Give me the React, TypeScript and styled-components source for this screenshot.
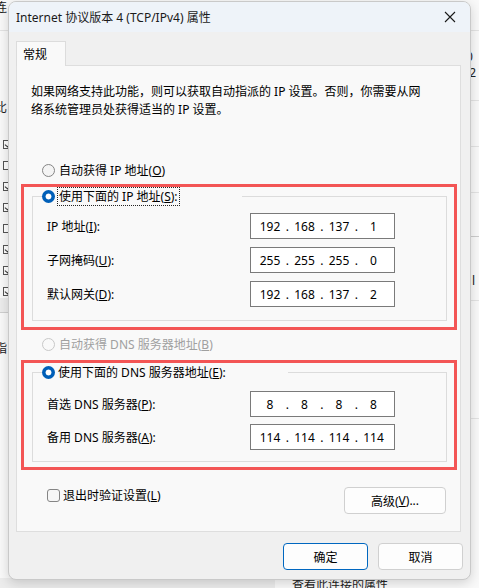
import React from "react";
import styled, { createGlobalStyle, css } from "styled-components";

const FONT = `"Noto Sans", "Noto Sans CJK SC", sans-serif`;

const GlobalStyle = createGlobalStyle`
  html, body {
    margin: 0;
    padding: 0;
  }
  body {
    background: #f7f7f7;
    font-family: ${FONT};
    font-size: 12px;
    color: #000;
  }
`;

const Screen = styled.div`
  position: relative;
  width: 479px;
  height: 588px;
  overflow: hidden;
  background: #f9f9f9;
`;

/* ---- window behind the dialog ---- */

const BackWindow = styled.div`
  position: absolute;
  inset: 0;
  background: #f9f9f9;
`;

const BgText = styled.span<{ $x: number; $y: number; $color?: string }>`
  position: absolute;
  left: ${(p) => p.$x}px;
  top: ${(p) => p.$y}px;
  font-size: 12px;
  line-height: 14px;
  color: ${(p) => p.$color || "#222"};
  white-space: nowrap;
`;

const BgCheck = styled.span<{ $y: number; $on?: boolean }>`
  position: absolute;
  left: 3px;
  top: ${(p) => p.$y}px;
  width: 9px;
  height: 9px;
  box-sizing: border-box;
  border: 1px solid #555;
  background: #fff;
  &::after {
    content: "";
    display: ${(p) => (p.$on ? "block" : "none")};
    width: 3px;
    height: 5px;
    margin: 0 0 0 2px;
    border-right: 1px solid #333;
    border-bottom: 1px solid #333;
    transform: rotate(40deg);
  }
`;

const BgLine = styled.div<{ $y: number; $x: number; $w: number; $color?: string }>`
  position: absolute;
  left: ${(p) => p.$x}px;
  top: ${(p) => p.$y}px;
  width: ${(p) => p.$w}px;
  height: 1px;
  background: ${(p) => p.$color || "#e3e3e3"};
`;

const BgBand = styled.div<{ $x: number; $y: number; $w: number; $h: number }>`
  position: absolute;
  left: ${(p) => p.$x}px;
  top: ${(p) => p.$y}px;
  width: ${(p) => p.$w}px;
  height: ${(p) => p.$h}px;
  background: #ececec;
`;

/* ---- dialog ---- */

const Dialog = styled.div`
  position: absolute;
  left: 8px;
  top: 1px;
  width: 463px;
  height: 579px;
  box-sizing: border-box;
  border: 1px solid #c9c9c9;
  border-radius: 8px;
  background: #f0f0f0;
  overflow: hidden;
  box-shadow: 0 3px 12px rgba(0, 0, 0, 0.16);
  display: flex;
  flex-direction: column;
`;

const TitleBar = styled.div`
  height: 30px;
  flex: none;
  display: flex;
  align-items: center;
  justify-content: space-between;
  padding-left: 7px;
  background: #eef3f9;
`;

const Title = styled.span`
  font-size: 12px;
  color: #1a1a1a;
`;

const CloseBox = styled.div`
  width: 40px;
  height: 30px;
  display: flex;
  align-items: center;
  justify-content: center;
`;

const Body = styled.div`
  display: flex;
  flex-direction: column;
  padding: 9px 9px 0 7px;
`;

const Tab = styled.div`
  position: relative;
  z-index: 1;
  width: 50px;
  height: 25px;
  box-sizing: border-box;
  margin-bottom: -1px;
  border: 1px solid #dcdcdc;
  border-bottom: none;
  background: #f9f9f9;
  padding-left: 6px;
  display: flex;
  align-items: center;
`;

const Panel = styled.div`
  height: 467px;
  box-sizing: border-box;
  border: 1px solid #dedede;
  background: #f9f9f9;
  display: flex;
  flex-direction: column;
`;

const Description = styled.p`
  margin: 17px 0 0 14px;
  line-height: 17.5px;
`;

const RadioRow = styled.div<{ $top: number; $disabled?: boolean }>`
  margin: ${(p) => p.$top}px 0 0 25px;
  height: 18px;
  display: flex;
  align-items: center;
  gap: 4px;
  color: ${(p) => (p.$disabled ? "#a0a0a0" : "#000")};
`;

const RadioDot = styled.span<{ $checked?: boolean; $disabled?: boolean }>`
  flex: none;
  width: 13px;
  height: 13px;
  border-radius: 50%;
  box-sizing: border-box;
  ${(p) =>
    p.$checked
      ? css`
          background: radial-gradient(circle, #fff 0 2.6px, #005fb8 3.3px);
        `
      : css`
          border: 1px solid ${p.$disabled ? "#c8c8c8" : "#858585"};
          background: ${p.$disabled ? "#f9f9f9" : "#f4f4f4"};
        `}
`;

const FocusLabel = styled.span`
  outline: 1px dotted #222;
  outline-offset: 0;
  padding: 0 1px;
  line-height: 17px;
`;

const RedFrame = styled.div<{ $top: number; $bottom: number }>`
  margin: ${(p) => p.$top}px 3px 0 4px;
  border: 3px solid #f35555;
  padding: 0 7px ${(p) => p.$bottom}px 8px;
`;

const GroupBox = styled.fieldset<{ $padTop: number; $padBottom: number }>`
  margin: 0;
  min-width: 0;
  border: 1px solid #dcdcdc;
  padding: ${(p) => p.$padTop}px 14px ${(p) => p.$padBottom}px 14px;
`;

const GroupLegend = styled.legend<{ $width: number }>`
  margin-left: -5px;
  padding: 0;
  width: ${(p) => p.$width}px;
  height: 18px;
  display: flex;
  align-items: center;
  gap: 3px;
`;

const FieldGrid = styled.div<{ $gap: number }>`
  display: grid;
  grid-template-columns: 203px 145px;
  row-gap: ${(p) => p.$gap}px;
  align-items: center;
`;

const FieldLabel = styled.span`
  white-space: nowrap;
`;

const IpBox = styled.div`
  width: 145px;
  height: 26px;
  box-sizing: border-box;
  border: 1px solid #7a7a7a;
  background: #fff;
  padding-left: 6px;
  display: flex;
  align-items: center;
  font-size: 12px;
`;

const IpPart = styled.span`
  width: 26px;
  text-align: center;
`;

const IpDot = styled.span`
  width: 8.5px;
  text-align: center;
`;

const BottomRow = styled.div`
  margin: 16px 14px 0 30px;
  display: flex;
  align-items: flex-start;
  justify-content: space-between;
`;

const CheckRow = styled.label`
  height: 18px;
  display: flex;
  align-items: center;
  gap: 3px;
`;

const CheckBox = styled.span`
  width: 13px;
  height: 13px;
  box-sizing: border-box;
  border: 1px solid #858585;
  border-radius: 3px;
  background: #f6f6f6;
`;

const Button = styled.div<{ $primary?: boolean; $width: number; $top?: number }>`
  width: ${(p) => p.$width}px;
  height: 27px;
  margin-top: ${(p) => p.$top || 0}px;
  box-sizing: border-box;
  border: 1px solid ${(p) => (p.$primary ? "#0067c0" : "#d0d0d0")};
  border-radius: 4px;
  background: #fdfdfd;
  display: flex;
  align-items: center;
  justify-content: center;
`;

const Footer = styled.div`
  display: flex;
  justify-content: flex-end;
  gap: 10px;
  padding-top: 11px;
  margin-right: -2px;
`;

const IpField = ({ parts }: { parts: string[] }) => (
  <IpBox>
    {parts.map((p, i) => (
      <React.Fragment key={i}>
        {i > 0 && <IpDot>.</IpDot>}
        <IpPart>{p}</IpPart>
      </React.Fragment>
    ))}
  </IpBox>
);

const ipRows = [
  { label: "IP 地址(", key: "I", parts: ["192", "168", "137", "1"] },
  { label: "子网掩码(", key: "U", parts: ["255", "255", "255", "0"] },
  { label: "默认网关(", key: "D", parts: ["192", "168", "137", "2"] },
];

const dnsRows = [
  { label: "首选 DNS 服务器(", key: "P", parts: ["8", "8", "8", "8"] },
  { label: "备用 DNS 服务器(", key: "A", parts: ["114", "114", "114", "114"] },
];

const bgChecks = [140, 161, 182, 203, 224, 245, 266, 287];

export default function App() {
  return (
    <Screen>
      <GlobalStyle />
      <BackWindow>
        <BgText $x={-5} $y={1}>连</BgText>
        <BgLine $x={0} $y={30} $w={479} />
        <BgText $x={-5} $y={101}>比</BgText>
        {bgChecks.map((y, i) => (
          <BgCheck key={y} $y={y} $on={i !== 1 && i !== 4} />
        ))}
        <BgBand $x={0} $y={298} $w={8} $h={14} />
        <BgLine $x={0} $y={312} $w={8} $color="#cfcfcf" />
        <BgText $x={-5} $y={342}>指</BgText>
        <BgText $x={466} $y={50}>0</BgText>
        <BgText $x={466} $y={66}>:2</BgText>
        <BgLine $x={471} $y={100} $w={8} />
        <BgLine $x={471} $y={146} $w={8} />
        <BgLine $x={471} $y={192} $w={8} />
        <BgLine $x={471} $y={236} $w={8} $color="#cccccc" />
        <BgText $x={472} $y={274}>l</BgText>
        <BgLine $x={471} $y={300} $w={8} />
        <BgLine $x={471} $y={418} $w={8} />
        <BgBand $x={0} $y={578} $w={275} $h={10} />
        <BgText $x={292} $y={578}>查看此连接的属性</BgText>
      </BackWindow>

      <Dialog>
        <TitleBar>
          <Title>Internet 协议版本 4 (TCP/IPv4) 属性</Title>
          <CloseBox>
            <svg width="12" height="12" viewBox="0 0 12 12">
              <path d="M1 1 L11 11 M11 1 L1 11" stroke="#1a1a1a" strokeWidth="1.1" fill="none" />
            </svg>
          </CloseBox>
        </TitleBar>

        <Body>
          <Tab>常规</Tab>
          <Panel>
            <Description>
              如果网络支持此功能，则可以获取自动指派的 IP 设置。否则，你需要从网
              <br />
              络系统管理员处获得适当的 IP 设置。
            </Description>

            <RadioRow $top={43}>
              <RadioDot />
              <span>
                自动获得 IP 地址(<u>O</u>)
              </span>
            </RadioRow>

            <RedFrame $top={5} $bottom={6}>
              <GroupBox $padTop={8} $padBottom={13}>
                <GroupLegend $width={200}>
                  <RadioDot $checked />
                  <FocusLabel>
                    使用下面的 IP 地址(<u>S</u>):
                  </FocusLabel>
                </GroupLegend>
                <FieldGrid $gap={8}>
                  {ipRows.map((r) => (
                    <React.Fragment key={r.key}>
                      <FieldLabel>
                        {r.label}
                        <u>{r.key}</u>):
                      </FieldLabel>
                      <IpField parts={r.parts} />
                    </React.Fragment>
                  ))}
                </FieldGrid>
              </GroupBox>
            </RedFrame>

            <RadioRow $top={5} $disabled>
              <RadioDot $disabled />
              <span>
                自动获得 DNS 服务器地址(<u>B</u>)
              </span>
            </RadioRow>

            <RedFrame $top={7} $bottom={5}>
              <GroupBox $padTop={10} $padBottom={11}>
                <GroupLegend $width={246}>
                  <RadioDot $checked />
                  <span>
                    使用下面的 DNS 服务器地址(<u>E</u>):
                  </span>
                </GroupLegend>
                <FieldGrid $gap={7}>
                  {dnsRows.map((r) => (
                    <React.Fragment key={r.key}>
                      <FieldLabel>
                        {r.label}
                        <u>{r.key}</u>):
                      </FieldLabel>
                      <IpField parts={r.parts} />
                    </React.Fragment>
                  ))}
                </FieldGrid>
              </GroupBox>
            </RedFrame>

            <BottomRow>
              <CheckRow>
                <CheckBox />
                <span>
                  退出时验证设置(<u>L</u>)
                </span>
              </CheckRow>
              <Button $width={102} $top={1}>
                高级(<u>V</u>)...
              </Button>
            </BottomRow>
          </Panel>

          <Footer>
            <Button $primary $width={85}>
              确定
            </Button>
            <Button $width={85}>取消</Button>
          </Footer>
        </Body>
      </Dialog>
    </Screen>
  );
}
